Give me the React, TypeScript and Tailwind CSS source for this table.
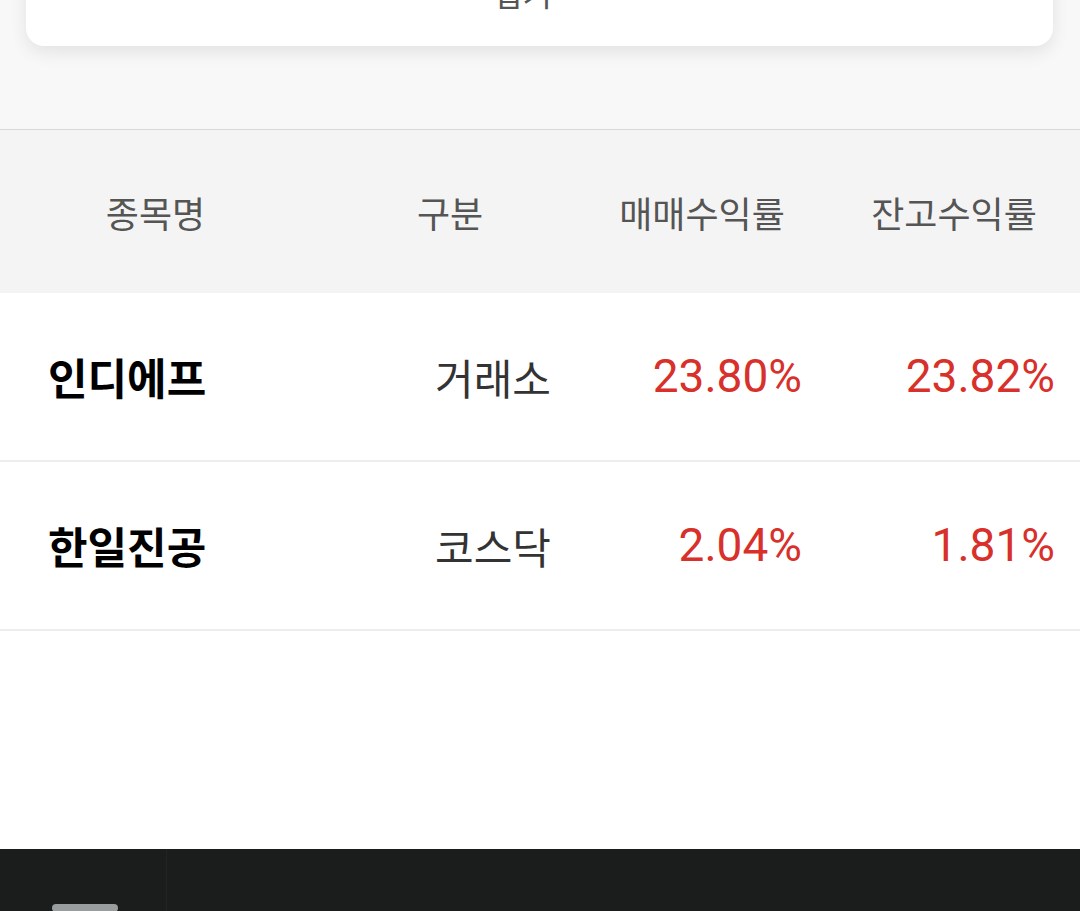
const rows = [
  { name: "인디에프", market: "거래소", trade: "23.80%", balance: "23.82%" },
  { name: "한일진공", market: "코스닥", trade: "2.04%", balance: "1.81%" },
];

const kr = { fontFamily: '"Noto Sans CJK KR", "Noto Sans", sans-serif' };
const num = { fontFamily: 'Roboto, "Noto Sans CJK KR", sans-serif' };

export default function App() {
  return (
    <div className="w-[1080px] h-[911px] overflow-hidden bg-white flex flex-col" style={kr}>
      {/* top area with the collapsed card */}
      <div className="h-[129px] bg-[#f8f8f8] px-[26px] pr-[27px]">
        <div className="-mt-[70px] h-[116px] rounded-b-[18px] bg-white shadow-[0_6px_18px_rgba(0,0,0,0.09)] flex items-end justify-center pb-[34px]">
          <span className="mr-[34px] text-[32px] leading-[40px] text-[#555]">접기</span>
        </div>
      </div>
      <div className="h-px bg-[#d9d9d9]" />

      {/* header */}
      <div className="h-[163px] bg-[#f4f4f4] grid grid-cols-[324px_252px_252px_252px] items-center text-[36px] text-[#555]">
        <div className="pr-[13px] text-center">종목명</div>
        <div className="text-center">구분</div>
        <div className="text-center">매매수익률</div>
        <div className="text-center">잔고수익률</div>
      </div>

      {rows.map((r) => (
        <div
          key={r.name}
          className="h-[169px] border-b-2 border-[#ededed] grid grid-cols-[324px_252px_252px_252px] items-center"
        >
          <div className="pl-[48px] text-[43px] font-bold text-black">{r.name}</div>
          <div className="pr-[25px] text-right text-[42px] text-[#333]">{r.market}</div>
          <div className="pr-[26px] text-right text-[46px] text-[#d8302a]" style={num}>
            {r.trade}
          </div>
          <div className="pr-[25px] text-right text-[46px] text-[#d8302a]" style={num}>
            {r.balance}
          </div>
        </div>
      ))}

      <div className="flex-1" />

      {/* bottom navigation bar */}
      <div className="h-[62px] bg-[#1b1c1c] flex shrink-0">
        <div className="w-[167px] border-r border-[#222424] flex items-end pl-[52px]">
          <div className="w-[66px] h-[8px] rounded-full bg-[#9a9d9d] -mb-[1px]" />
        </div>
        <div className="flex-1" />
      </div>
    </div>
  );
}
